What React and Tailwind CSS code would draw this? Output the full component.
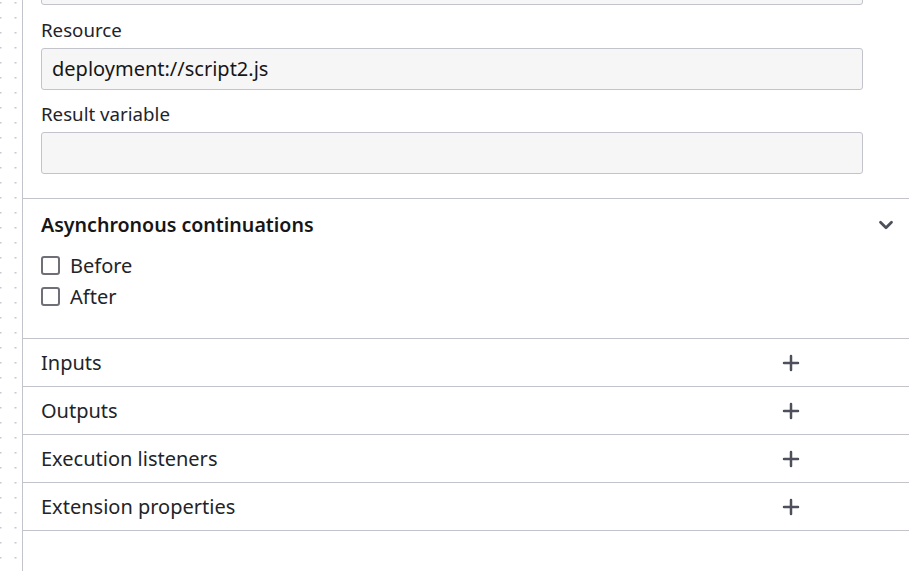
import React from 'react';
import { ChevronDown, Plus } from 'lucide-react';

function DotGrid() {
  return (
    <svg className="w-[22px] h-full shrink-0" width="22" height="571">
      <defs>
        <pattern id="dots" x="0" y="0" width="15" height="15" patternUnits="userSpaceOnUse">
          <rect x="0" y="2" width="1.5" height="1.5" fill="#c8c8d0" />
          <rect x="14.5" y="2" width="1.5" height="1.5" fill="#c8c8d0" />
        </pattern>
      </defs>
      <rect width="22" height="571" fill="url(#dots)" />
    </svg>
  );
}

function Field({ label, value, top }) {
  return (
    <div className="px-[18px]">
      <div className={`text-[18.7px] leading-[22px] text-[#22242a] pb-[7px] ${top}`}>{label}</div>
      <div className="w-[822px] h-[42px] rounded-[3px] border border-[#c3c3cc] bg-[#f6f6f6] flex items-center px-[10px] text-[20px] text-[#161616]">
        {value}
      </div>
    </div>
  );
}

function Checkbox({ label }) {
  return (
    <label className="flex items-center gap-[10px] h-[31px]">
      <span className="w-[19px] h-[19px] rounded-[3px] border-2 border-[#6f6f78] bg-white" />
      <span className="text-[20px] text-[#22242a]">{label}</span>
    </label>
  );
}

const groups = ['Inputs', 'Outputs', 'Execution listeners', 'Extension properties'];

export default function App() {
  return (
    <div className="w-[909px] h-[571px] overflow-hidden bg-white flex" style={{ fontFamily: '"Noto Sans", "Open Sans", Arial, sans-serif' }}>
      <DotGrid />
      <div className="flex-1 border-l border-[#c3c3cc] flex flex-col">
        <div className="px-[18px]">
          <div className="w-[822px] h-[42px] mt-[-37px] rounded-[3px] border border-[#c3c3cc] bg-[#f6f6f6]" />
        </div>
        <Field label="Resource" value="deployment://script2.js" top="pt-[14px]" />
        <Field label="Result variable" value="" top="pt-[13px]" />
        <div className="h-[24px]" />
        <div className="border-t border-[#c3c3cc]">
          <div className="flex items-center justify-between pl-[18px] pr-[12px] h-[51px]">
            <span className="text-[19.6px] font-semibold text-[#161616]">Asynchronous continuations</span>
            <ChevronDown className="w-[22px] h-[22px] text-[#4d4f5a]" strokeWidth={3} />
          </div>
          <div className="pl-[18px] pb-[26px]">
            <Checkbox label="Before" />
            <Checkbox label="After" />
          </div>
        </div>
        {groups.map((g) => (
          <div key={g} className="border-t border-[#c3c3cc] h-[48px] flex items-center pl-[18px]">
            <span className="text-[20px] text-[#22242a] w-[738px]">{g}</span>
            <Plus className="w-[24px] h-[24px] text-[#4d4f5a]" strokeWidth={2.5} />
          </div>
        ))}
        <div className="border-t border-[#c3c3cc]" />
      </div>
    </div>
  );
}
